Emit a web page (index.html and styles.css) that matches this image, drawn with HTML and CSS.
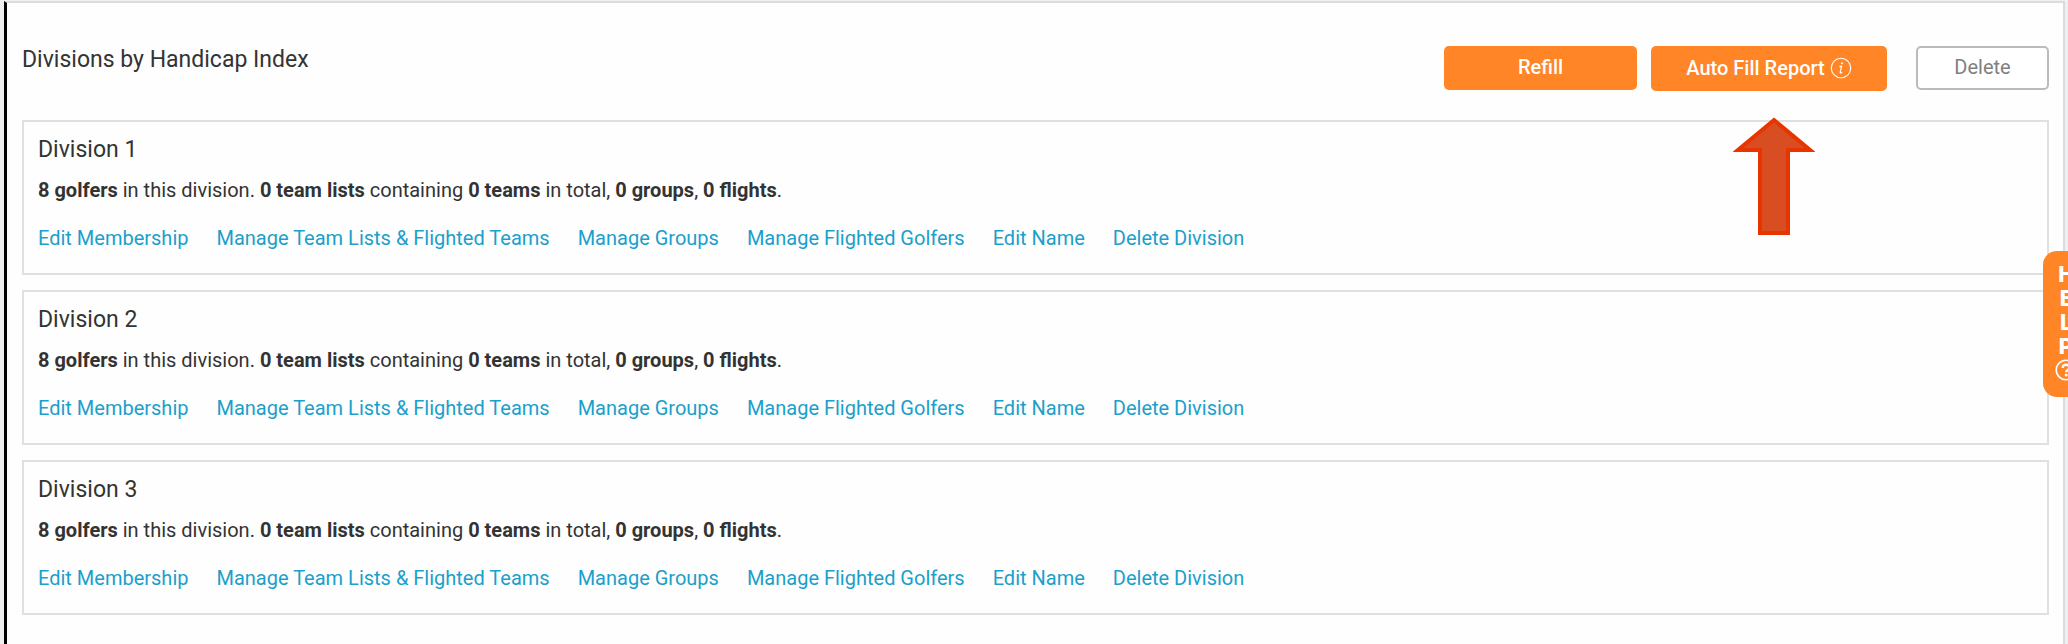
FILE: index.html
```html
<!DOCTYPE html>
<html lang="en">
<head>
    <meta charset="UTF-8">
    <meta name="viewport" content="width=device-width, initial-scale=1.0">
    <title>Divisions by Handicap Index</title>
    <link rel="stylesheet" href="styles.css">
</head>
<body>
    <main class="panel">
        <header class="panel-header">
            <h1>Divisions by Handicap Index</h1>
            <div class="actions">
                <button type="button" class="btn btn-refill">Refill</button>
                <div class="report">
                    <button type="button" class="btn btn-report">
                        Auto Fill Report
                        <svg class="info" viewBox="0 0 22 22" aria-hidden="true">
                            <circle cx="11" cy="11" r="9.7" fill="none" stroke="currentColor" stroke-width="1.1"/>
                            <circle cx="12" cy="6.2" r="1" fill="currentColor"/>
                            <path d="M9.4 9.6 L11.6 9.2 L10.2 15 Q10 16.6 12.2 15.4" fill="none" stroke="currentColor" stroke-width="1.1"/>
                        </svg>
                    </button>
                    <!-- Arrow pointing at the report button -->
                    <svg class="arrow" viewBox="0 0 82 118" aria-hidden="true">
                        <path d="M41 3 L77 33 H55 V116 H27 V33 H5 Z" fill="#d94d22" stroke="#e83500" stroke-width="4"/>
                    </svg>
                </div>
                <button type="button" class="btn btn-delete">Delete</button>
            </div>
        </header>

        <!-- Divisions -->
        <section class="division">
            <h2>Division 1</h2>
            <p><b>8 golfers</b> in this division. <b>0 team lists</b> containing <b>0 teams</b> in total, <b>0 groups</b>, <b>0 flights</b>.</p>
            <ul class="links">
                <li><a href="#">Edit Membership</a></li>
                <li><a href="#">Manage Team Lists &amp; Flighted Teams</a></li>
                <li><a href="#">Manage Groups</a></li>
                <li><a href="#">Manage Flighted Golfers</a></li>
                <li><a href="#">Edit Name</a></li>
                <li><a href="#">Delete Division</a></li>
            </ul>
        </section>
        <section class="division">
            <h2>Division 2</h2>
            <p><b>8 golfers</b> in this division. <b>0 team lists</b> containing <b>0 teams</b> in total, <b>0 groups</b>, <b>0 flights</b>.</p>
            <ul class="links">
                <li><a href="#">Edit Membership</a></li>
                <li><a href="#">Manage Team Lists &amp; Flighted Teams</a></li>
                <li><a href="#">Manage Groups</a></li>
                <li><a href="#">Manage Flighted Golfers</a></li>
                <li><a href="#">Edit Name</a></li>
                <li><a href="#">Delete Division</a></li>
            </ul>
        </section>
        <section class="division">
            <h2>Division 3</h2>
            <p><b>8 golfers</b> in this division. <b>0 team lists</b> containing <b>0 teams</b> in total, <b>0 groups</b>, <b>0 flights</b>.</p>
            <ul class="links">
                <li><a href="#">Edit Membership</a></li>
                <li><a href="#">Manage Team Lists &amp; Flighted Teams</a></li>
                <li><a href="#">Manage Groups</a></li>
                <li><a href="#">Manage Flighted Golfers</a></li>
                <li><a href="#">Edit Name</a></li>
                <li><a href="#">Delete Division</a></li>
            </ul>
        </section>
    </main>

    <!-- Help tab, half tucked behind the window edge -->
    <button type="button" class="help" aria-label="Help">
        <span>H</span>
        <span>E</span>
        <span>L</span>
        <span>P</span>
        <svg viewBox="0 0 22 22" aria-hidden="true">
            <circle cx="11" cy="11" r="9.8" fill="none" stroke="currentColor" stroke-width="1.6"/>
            <path d="M7.6 8.8 Q7.8 5.8 11 5.8 Q14.4 5.8 14.4 8.6 Q14.4 10 12.6 11 Q11.2 11.8 11.2 13.2" fill="none" stroke="currentColor" stroke-width="2.4"/>
            <circle cx="11.2" cy="16" r="1.5" fill="currentColor"/>
        </svg>
    </button>
</body>
</html>
```
FILE: styles.css
```css
*{
    box-sizing: border-box;
}
body{
    margin: 0;
    padding: 1px 3px 0 4px;
    background-color: #eef0f1;
    color: #333;
    font-family: Roboto, "Liberation Sans", sans-serif;
    font-size: 20px;
    line-height: 24px;
}
h1, h2, p, ul{
    margin: 0;
    padding: 0;
}
h1, h2{
    font-size: 23px;
    font-weight: 400;
    line-height: 28px;
}
.panel{
    min-height: calc(100vh - 1px);
    padding: 43px 14px 30px 15px;
    background-color: #fefefe;
    border: 2px solid #dcdcdc;
    border-left: 3px solid #000;
    border-bottom: none;
}
.panel-header{
    display: flex;
    justify-content: space-between;
    align-items: flex-start;
    margin-bottom: 29px;
}
.actions{
    display: flex;
    align-items: flex-start;
}
.btn{
    height: 44px;
    padding: 0 0 2px;
    border: none;
    border-radius: 5px;
    background-color: #ff8526;
    color: #fff;
    font-family: inherit;
    font-size: 20px;
    font-weight: 500;
    line-height: 24px;
    cursor: pointer;
}
.btn-refill{
    width: 193px;
    margin-right: 14px;
}
.report{
    position: relative;
    margin-right: 29px;
}
.btn-report{
    display: flex;
    justify-content: center;
    align-items: center;
    gap: 5px;
    width: 236px;
    height: 45px;
}
.info{
    width: 22px;
    height: 22px;
}
.btn-delete{
    width: 133px;
    border: 2px solid #bbb;
    background-color: #fff;
    color: #808080;
    font-weight: 400;
}
.arrow{
    position: absolute;
    top: 71px;
    left: 82px;
    width: 82px;
    height: 118px;
}
.division{
    padding: 14px 14px 23px;
    border: 2px solid #e0e0e0;
}
.division + .division{
    margin-top: 15px;
}
.division p{
    margin: 14px 0 24px;
}
.links{
    display: flex;
    gap: 28px;
    list-style: none;
}
.links a{
    color: #1b9fcb;
    text-decoration: none;
}
.links a:hover{
    text-decoration: underline;
}
.help{
    position: fixed;
    top: 251px;
    right: -21px;
    display: flex;
    flex-direction: column;
    align-items: center;
    width: 46px;
    padding: 12px 0 16px;
    border: none;
    border-radius: 14px;
    background-color: #ff8526;
    color: #fff;
    font-family: inherit;
    font-size: 22px;
    font-weight: 900;
    line-height: 24px;
    cursor: pointer;
}
.help svg{
    width: 22px;
    height: 22px;
}
```
